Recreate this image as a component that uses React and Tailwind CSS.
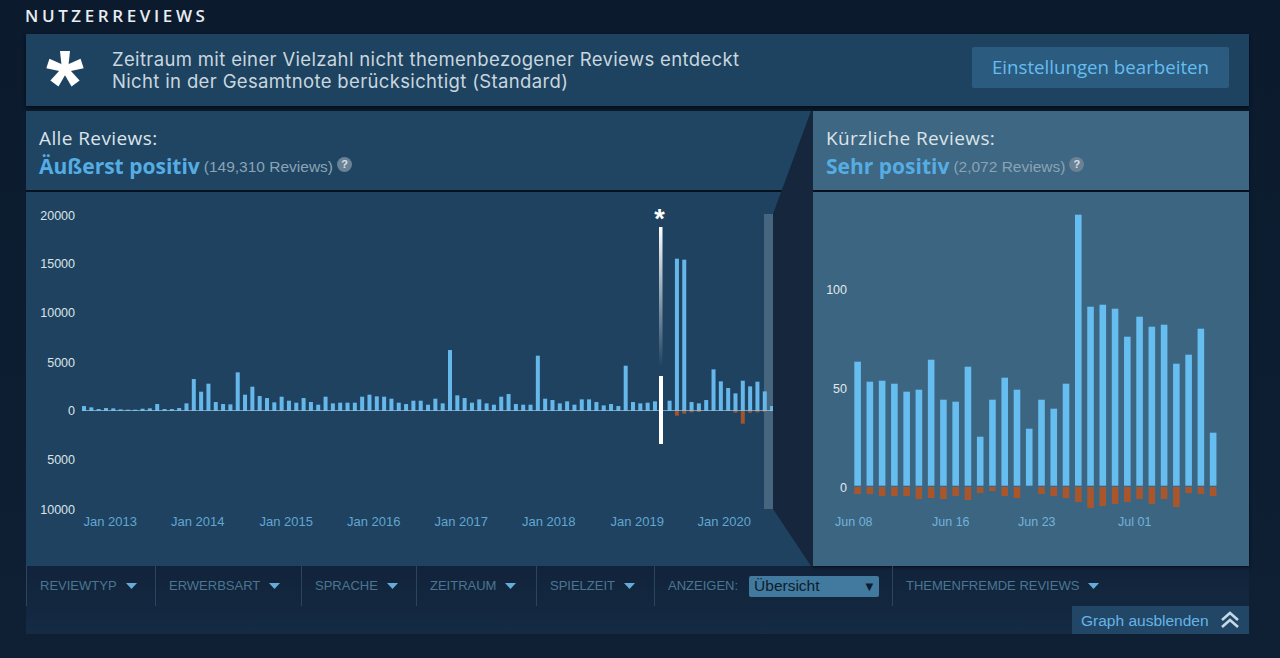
const leftPos = [14,10,5,8,7,4,3,3,6,7,20,5,5,8,22,95,57,81,26,20,19,115,48,72,44,38,25,42,30,24,38,26,18,42,22,24,24,24,42,48,43,42,36,24,20,30,30,18,36,22,182,46,38,24,34,22,18,42,50,20,18,18,165,36,32,22,28,18,34,34,26,16,20,14,135,26,22,24,28,0,30,456,453,26,22,32,124,88,68,52,90,73,87,58,14];
const leftNeg = { 81: 14, 82: 8, 83: 4, 84: 3, 89: 5, 90: 38, 91: 5, 92: 4, 93: 3 };
const rightPos = [124,104,105,102,94,96,126,86,84,119,49,86,108,96,57,86,77,102,271,179,181,177,149,169,159,161,122,131,157,53];
const rightNeg = [7,7,9,9,9,12,11,12,9,13,6,4,9,11,0,7,9,11,15,21,19,17,15,12,17,12,20,6,7,9];
const leftY = [["20000",219.5],["15000",267.5],["10000",316.5],["5000",366.5],["0",414.5],["5000",463.5],["10000",513.5]];
const leftX = [["Jan 2013",83.5],["Jan 2014",171],["Jan 2015",259.5],["Jan 2016",347],["Jan 2017",434.5],["Jan 2018",522],["Jan 2019",610.5],["Jan 2020",697.5]];
const rightY = [["100",293.5],["50",392.5],["0",491.5]];
const rightX = [["Jun 08",835],["Jun 16",932],["Jun 23",1018],["Jul 01",1118]];

const filters = [
  ["REVIEWTYP", "w-[129px]"],
  ["ERWERBSART", "w-[146px]"],
  ["SPRACHE", "w-[115px]"],
  ["ZEITRAUM", "w-[120px]"],
  ["SPIELZEIT", "w-[118px]"],
];

function Arrow() {
  return (
    <svg width="11" height="6" viewBox="0 0 11 6" className="shrink-0">
      <polygon points="0,0 11,0 5.5,6" fill="#67abd8" />
    </svg>
  );
}

function Help() {
  return (
    <span className="ml-[4px] inline-flex h-[15px] w-[15px] -translate-y-[2px] items-center justify-center rounded-full bg-[#6a8196] font-['Liberation_Sans',sans-serif] text-[11px] font-bold text-[#d7e0e7]">
      ?
    </span>
  );
}

function Head({ title, rating, count }) {
  return (
    <div className="flex h-[79px] flex-col justify-start pl-[13px] pt-[15px]">
      <div className="font-['Open_Sans',sans-serif] text-[19px] leading-[24px] tracking-[0.4px] text-[#dce4ea]">{title}</div>
      <div className="mt-[2px] flex items-center leading-[28px]">
        <span className="font-['Open_Sans',sans-serif] text-[21px] font-bold text-[#56ade4]">{rating}</span>
        <span className="ml-[4px] translate-y-[1px] font-['Liberation_Sans',sans-serif] text-[15.5px] text-[#8ba3b6]">{count}</span>
        <Help />
      </div>
    </div>
  );
}

function BigAsterisk() {
  return (
    <svg width="38" height="36" viewBox="-19 -18 38 36" className="shrink-0">
      {[0, 72, 144, 216, 288].map((a) => (
        <polygon key={a} points="-3,1 3,1 5,-18 -5,-18" transform={`rotate(${a})`} fill="#ffffff" />
      ))}
    </svg>
  );
}

function LeftChart() {
  return (
    <svg width="785" height="374" viewBox="26 192 785 374" className="block">
      <rect x="764" y="214" width="9" height="295" fill="#46667f" />
      {leftPos.map((h, i) => {
        const x = 82 + i * 7.32;
        if (i === 79) return null;
        return <rect key={i} x={x} y={410.7 - h / 3} width="4" height={h / 3} fill="#66b8ea" />;
      })}
      <rect x="82" y="410" width="691" height="1" fill="#9fd0ee" opacity="0.65" />
      {Object.entries(leftNeg).map(([i, h]) => (
        <rect key={i} x={82 + Number(i) * 7.32} y="411" width="4" height={h / 3} fill="#a4532d" />
      ))}
      <defs>
        <linearGradient id="fade" x1="0" y1="0" x2="0" y2="1">
          <stop offset="0" stopColor="#ffffff" />
          <stop offset="0.45" stopColor="#ffffff" stopOpacity="0.55" />
          <stop offset="1" stopColor="#ffffff" stopOpacity="0" />
        </linearGradient>
      </defs>
      <rect x="659" y="227" width="3.5" height="140" fill="url(#fade)" />
      <rect x="659" y="376" width="4" height="68" fill="#ffffff" />
      <text x="659.5" y="228" textAnchor="middle" className="fill-white font-['Liberation_Sans',sans-serif] text-[27px] font-bold">*</text>
      {leftY.map(([t, y], i) => (
        <text key={i} x="75" y={y} textAnchor="end" className="fill-[#dbe3e9] font-['Liberation_Sans',sans-serif] text-[12.5px]">{t}</text>
      ))}
      {leftX.map(([t, x]) => (
        <text key={t} x={x} y="526" className="fill-[#62a6d2] font-['Liberation_Sans',sans-serif] text-[13px]">{t}</text>
      ))}
    </svg>
  );
}

function RightChart() {
  return (
    <svg width="436" height="374" viewBox="813 192 436 374" className="block">
      {rightPos.map((h, i) => (
        <rect key={i} x={854.3 + i * 12.26} y={485.7 - h} width="6.6" height={h} fill="#66bdf0" />
      ))}
      {rightNeg.map((h, i) => (
        <rect key={i} x={854.3 + i * 12.26} y="487" width="6.6" height={h} fill="#a9562c" />
      ))}
      {rightY.map(([t, y]) => (
        <text key={t} x="847" y={y} textAnchor="end" className="fill-[#e2e8ed] font-['Liberation_Sans',sans-serif] text-[12.5px]">{t}</text>
      ))}
      {rightX.map(([t, x]) => (
        <text key={t} x={x} y="526" className="fill-[#72b3dc] font-['Liberation_Sans',sans-serif] text-[12.5px]">{t}</text>
      ))}
    </svg>
  );
}

export default function App() {
  return (
    <div className="h-[658px] w-[1280px] overflow-hidden bg-gradient-to-b from-[#0b1a2d] to-[#0f2034] pl-[26px] pr-[31px]">
      <div className="-ml-[1px] flex h-[34px] items-center pb-[3px] font-['Open_Sans',sans-serif] text-[17px] font-semibold uppercase tracking-[3.6px] text-[#e8edf1]">
        Nutzerreviews
      </div>

      <div className="flex h-[72px] items-center justify-between bg-[#1d4361] pl-[20px] pr-[20px] shadow-[0_2px_3px_#050d18]">
        <div className="flex items-center">
          <div className="w-[66px] -translate-y-[1px]">
            <BigAsterisk />
          </div>
          <div className="font-['Inter',sans-serif] text-[18.5px] leading-[22.4px] tracking-[0.35px] text-[#c9d6df]">
            <div>Zeitraum mit einer Vielzahl nicht themenbezogener Reviews entdeckt</div>
            <div>Nicht in der Gesamtnote berücksichtigt (Standard)</div>
          </div>
        </div>
        <div className="mb-[5px] flex h-[41px] w-[257px] items-center justify-center rounded-[2px] bg-[#2b5b7e] font-['Open_Sans',sans-serif] text-[18.7px] text-[#66bdf0]">
          Einstellungen bearbeiten
        </div>
      </div>

      <div className="mt-[5px] flex h-[455px]">
        <div className="relative flex w-[787px] flex-col bg-[#07111f]">
          <div className="bg-[#1f4562]">
            <Head title="Alle Reviews:" rating="Äußerst positiv" count="(149,310 Reviews)" />
          </div>
          <div className="mt-[2px] flex-1 bg-[#1e4260]">
            <LeftChart />
          </div>
          <svg width="42" height="455" viewBox="771 111 42 455" className="absolute right-0 top-0">
            <polygon points="811,111 813,111 813,566 811,566 773,509 773,214" fill="#15263d" />
          </svg>
        </div>
        <div className="flex w-[436px] flex-col bg-[#07111f] shadow-[0_1px_3px_#050d18]">
          <div className="bg-[#3d6782]">
            <Head title="Kürzliche Reviews:" rating="Sehr positiv" count="(2,072 Reviews)" />
          </div>
          <div className="mt-[2px] flex-1 bg-[#3c6581]">
            <RightChart />
          </div>
        </div>
      </div>

      <div className="h-[68px] bg-gradient-to-b from-[#11233a] to-[#142b43]">
        <div className="flex h-[40px] font-['Liberation_Sans',sans-serif] text-[13px] text-[#4b7693]">
          {filters.map(([label, w]) => (
            <div key={label} className={`flex items-center gap-[9px] border-l border-[#2a4560] pl-[13px] ${w}`}>
              <span>{label}</span>
              <Arrow />
            </div>
          ))}
          <div className="flex w-[238px] items-center gap-[11px] border-l border-[#2a4560] pl-[13px]">
            <span>ANZEIGEN:</span>
            <div className="flex h-[21px] w-[130px] items-center justify-between rounded-[2px] bg-[#417a9e] pl-[5px] pr-[6px] text-[15.5px] text-[#0d1c2e]">
              <span>Übersicht</span>
              <span className="font-['DejaVu_Sans',sans-serif] text-[10px]">▼</span>
            </div>
          </div>
          <div className="flex items-center gap-[9px] border-l border-[#2a4560] pl-[13px]">
            <span>THEMENFREMDE REVIEWS</span>
            <Arrow />
          </div>
        </div>
        <div className="flex justify-end">
          <div className="flex h-[28px] w-[177px] items-center justify-between bg-[#224766] pl-[9px] pr-[9px] font-['Liberation_Sans',sans-serif] text-[15.5px] text-[#66b4e6]">
            <span className="translate-y-[1px]">Graph ausblenden</span>
            <svg width="20" height="18" viewBox="0 0 20 18" fill="none" stroke="#c4d8e6" strokeWidth="2.6">
              <polyline points="2,9 10,2 18,9" />
              <polyline points="2,16 10,9 18,16" />
            </svg>
          </div>
        </div>
      </div>
    </div>
  );
}
